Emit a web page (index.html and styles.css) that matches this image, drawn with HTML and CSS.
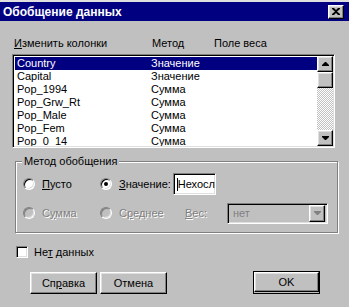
FILE: index.html
```html
<!DOCTYPE html>
<html lang="ru">
<head>
  <meta charset="UTF-8" />
  <title>Обобщение данных</title>
  <link rel="stylesheet" href="styles.css">
</head>
<body>
  <div class="window">
    <div class="titlebar">
      <span class="title">Обобщение данных</span>
      <span class="close-btn">
        <svg width="8" height="7" viewBox="0 0 8 7"><path d="M0 0h2l2 2 2-2h2v1L5 3.5 8 6v1H6L4 5 2 7H0V6l3-2.5L0 1z" fill="#000"/></svg>
      </span>
    </div>

    <div class="content">
      <div class="col-heads">
        <span class="head-name"><u>И</u>зменить колонки</span>
        <span class="head-method">Метод</span>
        <span>Поле веса</span>
      </div>

      <div class="listbox sunken">
        <div class="rows">
          <div class="row selected"><span class="cell-name">Country</span><span>Значение</span></div>
          <div class="row"><span class="cell-name">Capital</span><span>Значение</span></div>
          <div class="row"><span class="cell-name">Pop_1994</span><span>Сумма</span></div>
          <div class="row"><span class="cell-name">Pop_Grw_Rt</span><span>Сумма</span></div>
          <div class="row"><span class="cell-name">Pop_Male</span><span>Сумма</span></div>
          <div class="row"><span class="cell-name">Pop_Fem</span><span>Сумма</span></div>
          <div class="row"><span class="cell-name">Pop_0_14</span><span>Сумма</span></div>
        </div>
        <div class="scrollbar">
          <div class="sb-btn raised">
            <svg width="7" height="4" viewBox="0 0 7 4"><path d="M3 0h1l3 3v1H0V3z" fill="#000"/></svg>
          </div>
          <div class="sb-thumb raised"></div>
          <div class="sb-track"></div>
          <div class="sb-btn raised">
            <svg width="7" height="4" viewBox="0 0 7 4"><path d="M0 0h7v1L4 4H3L0 1z" fill="#000"/></svg>
          </div>
        </div>
      </div>

      <div class="group">
        <span class="group-label">Метод обобщения</span>
        <div class="group-row">
          <label class="opt opt-first"><span class="radio"></span><span><u>П</u>усто</span></label>
          <label class="opt opt-value"><span class="radio checked"></span><span><u>З</u>начение:</span></label>
          <span class="textbox sunken"><span class="caret"></span>Нехосл</span>
        </div>
        <div class="group-row">
          <label class="opt opt-first disabled"><span class="radio off"></span><span>С<u>у</u>мма</span></label>
          <label class="opt opt-avg disabled"><span class="radio off"></span><span>С<u>р</u>еднее</span></label>
          <span class="weight-label disabled"><u>В</u>ес:</span>
          <span class="combo sunken">
            <span class="combo-text">нет</span>
            <span class="combo-btn raised">
              <svg width="7" height="4" viewBox="0 0 7 4"><path d="M0 0h7v1L4 4H3L0 1z" fill="#808080"/></svg>
            </span>
          </span>
        </div>
      </div>

      <label class="nodata"><span class="checkbox sunken"></span><span>Не<u>т</u> данных</span></label>

      <div class="buttons">
        <span class="btn raised">Сп<u>р</u>авка</span>
        <span class="btn raised">Отмена</span>
        <span class="spacer"></span>
        <span class="btn-default"><span class="btn raised">OK</span></span>
      </div>
    </div>
  </div>
</body>
</html>
```

FILE: styles.css
```css
* {
  box-sizing: border-box;
}
body {
  margin: 0;
  background: #c0c0c0;
  font-family: "Liberation Sans", Arial, sans-serif;
  font-size: 11px;
  color: #000;
}
u {
  text-decoration: underline;
  text-underline-offset: 1px;
}
.raised {
  border: 1px solid;
  border-color: #fff #000 #000 #fff;
  box-shadow: inset -1px -1px #808080, inset 1px 1px #dfdfdf;
  background: #c0c0c0;
}
.sunken {
  border: 1px solid;
  border-color: #808080 #fff #fff #808080;
  box-shadow: inset 1px 1px #000, inset -1px -1px #dfdfdf;
}
.window {
  border-top: 2px solid #dfdfdf;
  height: 307px;
}
.titlebar {
  height: 19px;
  background: #000080;
  display: flex;
  align-items: center;
  justify-content: space-between;
  padding: 0 5px 0 3px;
}
.title {
  color: #fff;
  font-weight: bold;
  font-size: 12px;
}
.close-btn {
  width: 16px;
  height: 14px;
  background: #c0c0c0;
  border: 1px solid;
  border-color: #fff #000 #000 #fff;
  box-shadow: inset -1px -1px #808080, inset 1px 1px #dfdfdf;
  display: flex;
  align-items: center;
  justify-content: center;
}
.content {
  padding: 16px 0 0 0;
}
.col-heads {
  display: flex;
  padding-left: 14px;
  line-height: 13px;
}
.head-name {
  width: 138px;
}
.head-method {
  width: 62px;
}
.listbox {
  margin: 4px 0 0 12px;
  width: 323px;
  height: 94px;
  background: #fff;
  display: flex;
  padding: 1px;
}
.rows {
  flex: 1;
  overflow: hidden;
  padding: 1px 0 0 1px;
}
.row {
  display: flex;
  height: 13px;
  line-height: 13px;
  padding-left: 2px;
  white-space: nowrap;
}
.row.selected {
  background: #000080;
  color: #fff;
}
.cell-name {
  width: 134px;
}
.scrollbar {
  width: 16px;
  display: flex;
  flex-direction: column;
}
.sb-btn {
  height: 16px;
  display: flex;
  align-items: center;
  justify-content: center;
}
.sb-thumb {
  height: 16px;
}
.sb-track {
  flex: 1;
  background: repeating-conic-gradient(#fff 0 25%, #c0c0c0 0 50%) 0 0 / 2px 2px;
}
.group {
  position: relative;
  margin: 13px 0 0 15px;
  width: 323px;
  height: 72px;
  border: 1px solid #808080;
  box-shadow: inset 1px 1px #fff, 1px 1px #fff;
  padding: 11px 0 0 7px;
}
.group-label {
  position: absolute;
  top: -7px;
  left: 6px;
  padding: 0 2px;
  background: #c0c0c0;
  line-height: 13px;
}
.group-row {
  display: flex;
  align-items: center;
  height: 22px;
  margin-bottom: 7px;
}
.opt {
  display: flex;
  align-items: center;
  gap: 7px;
}
.opt-first {
  width: 77px;
}
.opt-value {
  width: 73px;
}
.opt-avg {
  width: 85px;
}
.radio {
  width: 12px;
  height: 12px;
  border-radius: 50%;
  border: 1px solid;
  border-color: #808080 #fff #fff #808080;
  box-shadow: inset 1px 1px #000, inset -1px -1px #dfdfdf;
  background: #fff;
  display: flex;
  align-items: center;
  justify-content: center;
}
.radio.checked::after {
  content: "";
  width: 4px;
  height: 4px;
  border-radius: 50%;
  background: #000;
}
.radio.off {
  background: #c0c0c0;
  box-shadow: inset 1px 1px #808080, inset -1px -1px #dfdfdf;
}
.disabled {
  color: #808080;
  text-shadow: 1px 1px #fff;
}
.textbox {
  width: 43px;
  height: 22px;
  background: #fff;
  display: flex;
  align-items: center;
  padding-left: 3px;
  overflow: hidden;
  white-space: nowrap;
  line-height: 13px;
}
.caret {
  width: 1px;
  height: 13px;
  background: #000;
}
.weight-label {
  width: 42px;
}
.combo {
  width: 101px;
  height: 21px;
  background: #c0c0c0;
  display: flex;
  align-items: center;
  padding: 2px;
}
.combo-text {
  flex: 1;
  padding-left: 3px;
  color: #808080;
}
.combo-btn {
  width: 16px;
  height: 17px;
  display: flex;
  align-items: center;
  justify-content: center;
}
.nodata {
  display: flex;
  align-items: center;
  gap: 6px;
  margin: 13px 0 0 16px;
}
.checkbox {
  width: 12px;
  height: 12px;
  background: #fff;
}
.buttons {
  display: flex;
  margin: 14px 0 0 30px;
  width: 290px;
  gap: 3px;
}
.spacer {
  flex: 1;
}
.btn {
  width: 67px;
  height: 22px;
  display: flex;
  align-items: center;
  justify-content: center;
}
.btn-default {
  border: 1px solid #000;
  margin-top: -1px;
}
.btn-default .btn {
  width: 65px;
  height: 20px;
}
```
